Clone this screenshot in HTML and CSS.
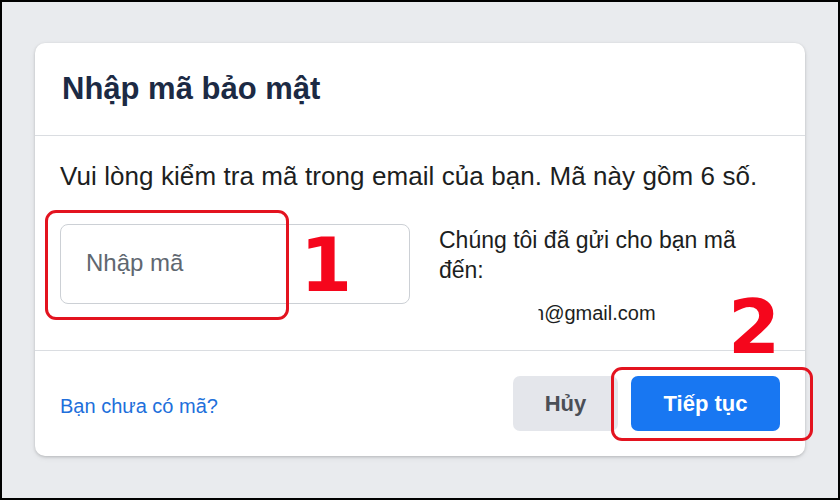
FILE: index.html
```html
<!DOCTYPE html>
<html lang="vi">
<head>
<meta charset="utf-8">
<title>Nhập mã bảo mật</title>
<link rel="stylesheet" href="styles.css">
</head>
<body>
<div class="screen">
  <div class="card">
    <div class="card-head">
      <h1 class="title">Nhập mã bảo mật</h1>
    </div>
    <div class="card-body">
      <p class="lead">Vui lòng kiểm tra mã trong email của bạn. Mã này gồm 6 số.</p>
      <div class="code-row">
        <input class="code-input" type="text" placeholder="Nhập mã">
        <div class="sent-info">
          <p class="sent-text">Chúng tôi đã gửi cho bạn mã đến:</p>
          <p class="sent-email"><span class="clip">n</span>@gmail.com</p>
        </div>
      </div>
    </div>
    <div class="card-foot">
      <a class="no-code" href="#">Bạn chưa có mã?</a>
      <div class="actions">
        <button class="btn btn-cancel" type="button">Hủy</button>
        <button class="btn btn-primary" type="button">Tiếp tục</button>
      </div>
    </div>
  </div>

  <div class="mark mark-box-1"></div>
  <div class="mark mark-box-2"></div>
  <div class="mark mark-num mark-num-1">1</div>
  <div class="mark mark-num mark-num-2">2</div>
</div>
</body>
</html>
```

FILE: styles.css
```css
html, body {
  margin: 0;
  padding: 0;
  background: #000;
}

.screen {
  position: relative;
  box-sizing: border-box;
  width: 840px;
  height: 500px;
  border: 2px solid #000;
  background: #e9ebee;
  padding: 41px 0 0 33px;
  font-family: "Liberation Sans", Arial, sans-serif;
  overflow: hidden;
}

.card {
  width: 770px;
  height: 413px;
  background: #fff;
  border-radius: 10px;
  box-shadow: 0 1px 3px rgba(0, 0, 0, 0.18), 0 2px 6px rgba(0, 0, 0, 0.06);
  display: flex;
  flex-direction: column;
}

.card-head {
  height: 92px;
  border-bottom: 1px solid #dadde1;
  padding: 0 27px;
  box-sizing: content-box;
}

.title {
  margin: 0;
  padding-top: 28px;
  font-size: 31px;
  line-height: 36px;
  font-weight: 700;
  color: #1c2a44;
}

.card-body {
  box-sizing: border-box;
  height: 215px;
  border-bottom: 1px solid #dadde1;
  padding: 25px 25px 0;
}

.lead {
  margin: 0 0 33px;
  font-size: 26px;
  letter-spacing: 0.08px;
  line-height: 30px;
  color: #1c1e21;
}

.code-row {
  display: flex;
  align-items: flex-start;
}

.code-input {
  box-sizing: border-box;
  width: 350px;
  height: 80px;
  margin: 0;
  border: 1px solid #ccd0d5;
  border-radius: 8px;
  padding: 0 0 2px 25px;
  font-family: "Liberation Sans", Arial, sans-serif;
  font-size: 24px;
  color: #1c1e21;
  background: #fff;
  outline: none;
}

.code-input::placeholder {
  color: #606770;
}

.sent-info {
  width: 320px;
  margin-left: 29px;
  padding-top: 1px;
}

.sent-text {
  margin: 0;
  font-size: 23px;
  line-height: 30px;
  color: #1c1e21;
}

.sent-email {
  margin: 16px 0 0;
  padding-left: 94px;
  font-size: 20px;
  line-height: 24px;
  color: #1c1e21;
}

.clip {
  display: inline-block;
  clip-path: inset(0 0 0 48%);
}

.card-foot {
  flex: 1;
  display: flex;
  align-items: center;
  justify-content: space-between;
  padding: 0 25px;
}

.no-code {
  margin-top: 6px;
  font-size: 20px;
  color: #216fdb;
  text-decoration: none;
}

.actions {
  display: flex;
  gap: 13px;
}

.btn {
  height: 55px;
  border: 0;
  border-radius: 7px;
  font-family: "Liberation Sans", Arial, sans-serif;
  font-size: 22px;
  font-weight: 700;
  padding: 0;
  cursor: pointer;
}

.btn-cancel {
  width: 105px;
  background: #e4e6eb;
  color: #4b4f56;
}

.btn-primary {
  width: 149px;
  background: #1877f2;
  color: #fff;
}

.mark {
  position: absolute;
}

.mark-box-1,
.mark-box-2 {
  box-sizing: border-box;
  border: 3px solid #e3131f;
  border-radius: 11px;
}

.mark-box-1 {
  left: 43px;
  top: 208px;
  width: 244px;
  height: 110px;
}

.mark-box-2 {
  left: 609px;
  top: 365px;
  width: 202px;
  height: 74px;
}

.mark-num {
  font-family: "DejaVu Sans", sans-serif;
  font-weight: 700;
  font-size: 75px;
  line-height: 75px;
  color: #f5061c;
}

.mark-num-1 {
  left: 298px;
  top: 226px;
  letter-spacing: -2px;
}

.mark-num-2 {
  left: 726px;
  top: 288px;
}
```
